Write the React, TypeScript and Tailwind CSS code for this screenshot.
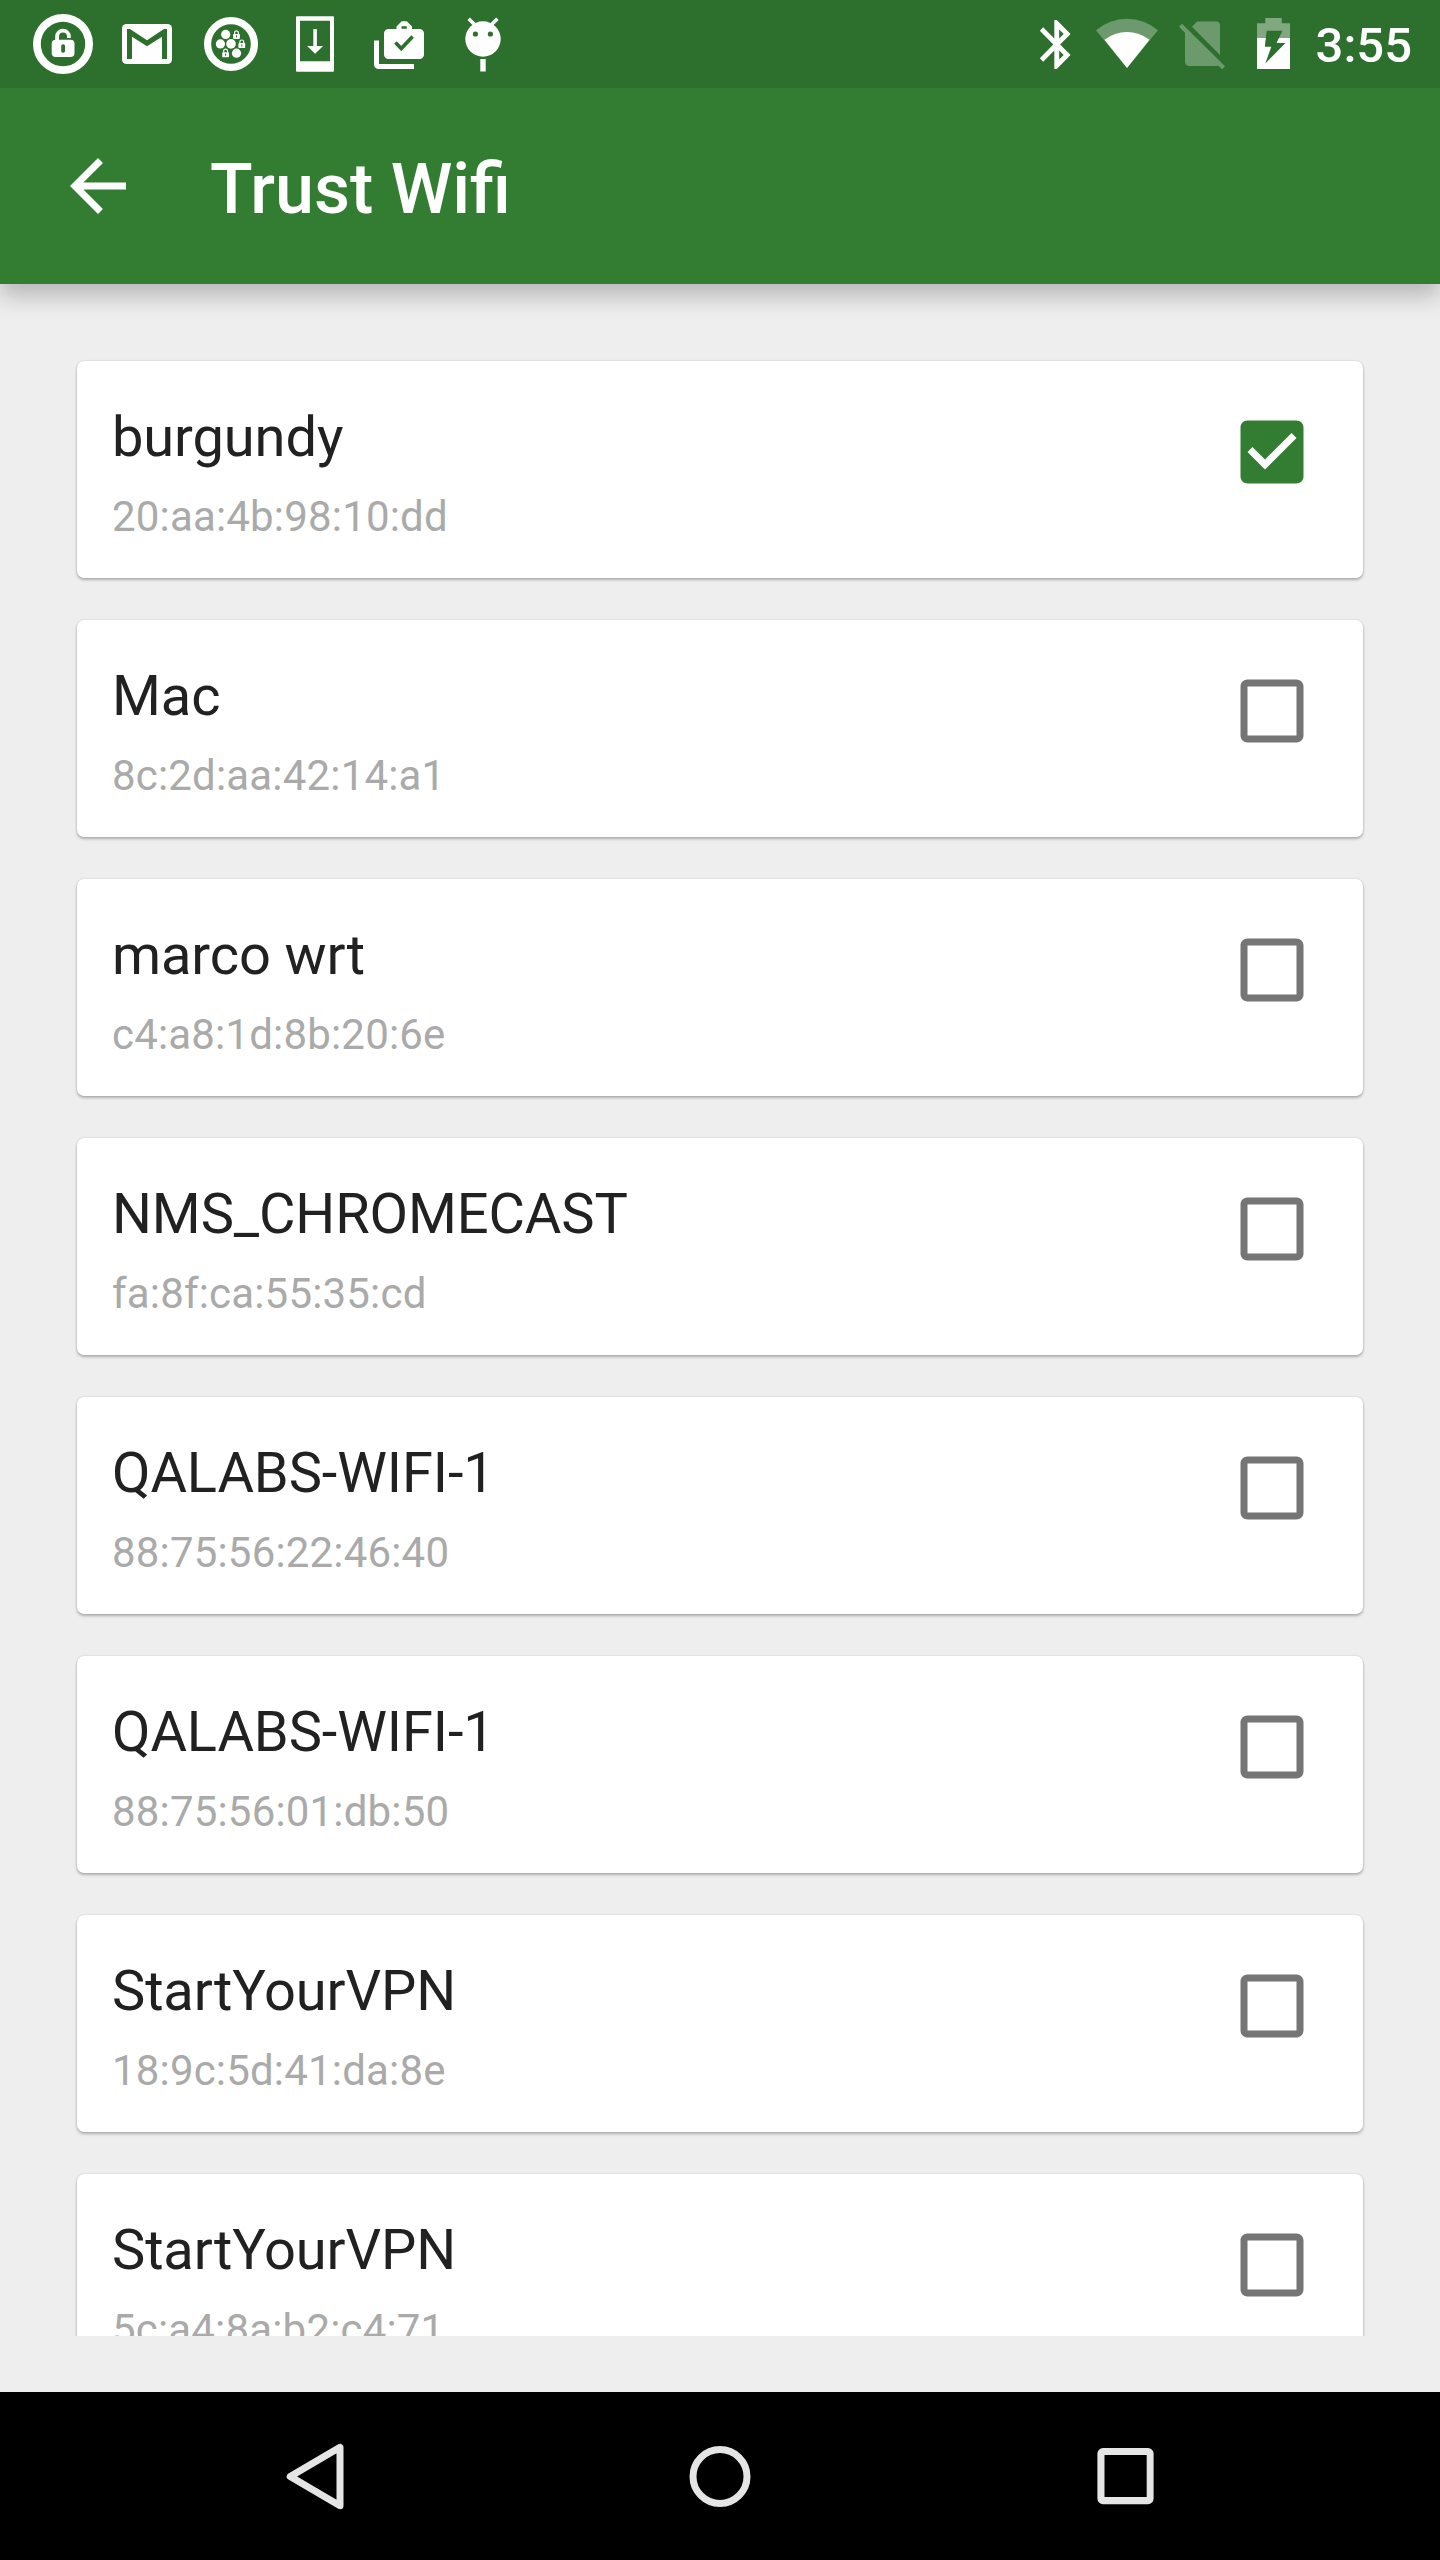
import React from "react";

type Network = { name: string; mac: string; trusted?: boolean };

const networks: Network[] = [
  { name: "burgundy", mac: "20:aa:4b:98:10:dd", trusted: true },
  { name: "Mac", mac: "8c:2d:aa:42:14:a1" },
  { name: "marco wrt", mac: "c4:a8:1d:8b:20:6e" },
  { name: "NMS_CHROMECAST", mac: "fa:8f:ca:55:35:cd" },
  { name: "QALABS-WIFI-1", mac: "88:75:56:22:46:40" },
  { name: "QALABS-WIFI-1", mac: "88:75:56:01:db:50" },
  { name: "StartYourVPN", mac: "18:9c:5d:41:da:8e" },
  { name: "StartYourVPN", mac: "5c:a4:8a:b2:c4:71" },
];

const TinyLock = ({ x, y }: { x: number; y: number }) => (
  <g transform={`translate(${x} ${y})`}>
    <rect x="-3.4" y="-0.7" width="6.8" height="5" rx="0.8" fill="#fff" />
    <path d="M-1.9 -0.5V-1.9a1.9 1.9 0 0 1 3.8 0V-0.5" fill="none" stroke="#fff" strokeWidth="1.2" />
    <path d="M0 0.7V2.8" stroke="#2d6f2d" strokeWidth="1" />
  </g>
);

function StatusBar() {
  return (
    <div className="flex h-[88px] items-start bg-[#2d6f2d] pl-[30px] pr-[28px] pt-[10px]">
      {/* Lock */}
      <svg className="h-[70px] w-[66px] shrink-0" viewBox="30 10 66 70">
        <circle cx="63" cy="44" r="26.1" fill="none" stroke="#fff" strokeWidth="7.8" />
        <path d="M57.1 40V36.6a5.9 5.9 0 0 1 11.8 0V38" fill="none" stroke="#fff" strokeWidth="3.8" />
        <rect x="51.7" y="39.7" width="22.8" height="17.4" rx="4" fill="#fff" />
        <rect x="61.2" y="44.3" width="3.8" height="8.4" rx="1.6" fill="#2d6f2d" />
      </svg>
      {/* Mail */}
      <svg className="ml-[16px] h-[70px] w-[70px] shrink-0" viewBox="112 10 70 70">
        <rect x="122" y="24" width="50" height="40" rx="4.5" fill="#fff" />
        <path d="M127 29h3l17 11.2L164 29h3v30h-5V36.8L147 46.2 132 36.8V59h-5z" fill="#2d6f2d" />
      </svg>
      {/* Lock cluster */}
      <svg className="ml-[13px] h-[70px] w-[70px] shrink-0" viewBox="195 10 70 70">
        <circle cx="231" cy="44" r="23.4" fill="none" stroke="#fff" strokeWidth="7.2" />
        <circle cx="225.7" cy="34.4" r="4.6" fill="#fff" />
        <circle cx="220.4" cy="43.9" r="4.6" fill="#fff" />
        <circle cx="231" cy="43.9" r="4.8" fill="#fff" />
        <circle cx="236.5" cy="53.2" r="4.6" fill="#fff" />
        <TinyLock x={236.5} y={34.6} />
        <TinyLock x={241.8} y={43.8} />
        <TinyLock x={225.6} y={53} />
      </svg>
      {/* System download */}
      <svg className="ml-[20px] h-[70px] w-[60px] shrink-0" viewBox="285 10 60 70">
        <path fillRule="evenodd" d="M297 16.3h36a1 1 0 0 1 1 1v53.4a1 1 0 0 1-1 1h-36a1 1 0 0 1-1-1v-53.4a1 1 0 0 1 1-1zM300 20.7v40.6h30v-40.6z" fill="#fff" />
        <path d="M313.3 29h3.6v17h6.2l-8 7.8-8-7.8h6.2z" fill="#fff" />
      </svg>
      {/* Briefcase check */}
      <svg className="ml-[19px] h-[70px] w-[70px] shrink-0" viewBox="364 10 70 70">
        <path fillRule="evenodd" d="M388.5 29h8v-2.5l5.2-5.3h5.1l5.2 5.3v2.5h7.5a4.5 4.5 0 0 1 4.5 4.5v21a4.5 4.5 0 0 1-4.5 4.5h-31a4.5 4.5 0 0 1-4.5-4.5v-21a4.5 4.5 0 0 1 4.5-4.5zM401.5 26.2v2.6h5.3v-2.6z" fill="#fff" />
        <path d="M395.4 42.6l5.9 6L412.6 36.5" fill="none" stroke="#2d6f2d" strokeWidth="3.6" />
        <path d="M374 40.5h5V64h35v5h-35.5a4.5 4.5 0 0 1-4.5-4.5z" fill="#fff" />
      </svg>
      {/* Android head */}
      <svg className="ml-[16px] h-[70px] w-[66px] shrink-0" viewBox="450 10 66 70">
        <circle cx="483" cy="39" r="17.7" fill="#fff" />
        <path d="M468.7 18.7l6.5 6.5M497.4 18.7l-6.5 6.5" stroke="#fff" strokeWidth="3.5" />
        <circle cx="475.4" cy="34" r="2.6" fill="#2d6f2d" />
        <circle cx="490.4" cy="34" r="2.6" fill="#2d6f2d" />
        <rect x="480.3" y="59" width="5.4" height="12.5" fill="#fff" />
      </svg>

      {/* Bluetooth */}
      <svg className="ml-auto h-[70px] w-[50px] shrink-0" viewBox="1030 10 50 70">
        <path transform="translate(1027.700 15.100) scale(2.420 2.450)" d="M17.71 7.71L12 2h-1v7.59L6.41 5 5 6.41 10.59 12 5 17.59 6.41 19 11 14.41V22h1l5.71-5.71-4.3-4.29 4.3-4.29zM13 5.83l1.88 1.88L13 9.59V5.83zm1.88 10.46L13 18.17v-3.76l1.88 1.88z" fill="#fff" />
      </svg>
      {/* Wifi signal */}
      <svg className="ml-[10px] h-[70px] w-[74px] shrink-0" viewBox="1090 10 74 70">
        <path d="M1127 68L1096 30.3A47.6 47.6 0 0 1 1158 30.3z" fill="#fff" fillOpacity="0.3" />
        <path d="M1127 68L1104.5 39.7A36.4 36.4 0 0 1 1149.5 39.7z" fill="#fff" />
      </svg>
      {/* No SIM */}
      <svg className="ml-[6px] h-[70px] w-[60px] shrink-0" viewBox="1170 10 60 70">
        <path d="M1192 26.7l5-5.2h19a4 4 0 0 1 4 4V55zM1179 26.7l3-3L1225 66.3l-3 3-3.8-3.8q-1 .5-2.200.5H1189.3a4.3 4.3 0 0 1-4.3-4.3V32.7z" fill="#fff" fillOpacity="0.3" />
      </svg>
      {/* Battery charging */}
      <svg className="ml-[20px] h-[70px] w-[46px] shrink-0" viewBox="1250 10 46 70">
        <path d="M1257 38V23.3h8.3V18h16.4v5.3h8.3V38z" fill="#fff" fillOpacity="0.4" />
        <path d="M1257 38h33v31h-33z" fill="#fff" />
        <path d="M1266.7 30.7h15.8L1276.5 43h8.9L1265.3 63.4 1271.3 46.7h-6.5z" fill="#2d6f2d" />
      </svg>
      <div className="mt-[7px] w-[116px] shrink-0 whitespace-nowrap text-right text-[49px] font-medium leading-[58px] text-white">
        3:55
      </div>
    </div>
  );
}

function CheckBox({ checked }: { checked?: boolean }) {
  return (
    <svg className="mr-[49px] mt-[49px] size-[84px] shrink-0" viewBox="0 0 24 24">
      {checked ? (
        <path fill="#337d33" d="M19 3H5c-1.11 0-2 .9-2 2v14c0 1.1.89 2 2 2h14c1.11 0 2-.9 2-2V5c0-1.1-.89-2-2-2zm-9 14l-5-5 1.41-1.41L10 14.17l7.59-7.59L19 8l-9 9z" />
      ) : (
        <path fill="#757575" d="M19 5v14H5V5h14m0-2H5c-1.1 0-2 .9-2 2v14c0 1.1.9 2 2 2h14c1.1 0 2-.9 2-2V5c0-1.1-.9-2-2-2z" />
      )}
    </svg>
  );
}

function NetworkCard({ network }: { network: Network }) {
  return (
    <div className="flex h-[217px] shrink-0 items-start justify-between rounded-[7px] bg-white shadow-[0_2px_3px_rgba(0,0,0,0.26),0_0_2px_rgba(0,0,0,0.16)]">
      <div className="pl-[35px] pt-[43px]">
        <div className="text-[56px] leading-[66px] tracking-[-0.1px] text-[#212121]">{network.name}</div>
        <div className="mt-[22px] text-[42px] leading-[50px] tracking-[0.18px] text-[#aaaaaa]">{network.mac}</div>
      </div>
      <CheckBox checked={network.trusted} />
    </div>
  );
}

export default function App() {
  return (
    <div className="flex h-[2560px] w-[1440px] flex-col overflow-hidden bg-[#eeeeee] font-[Roboto,sans-serif]">
      <header className="relative z-10 shrink-0 bg-[#337d33] shadow-[0_12px_22px_rgba(0,0,0,0.23)]">
        <StatusBar />
        <div className="flex h-[196px] items-start pl-[56px] pt-[56px]">
          <svg className="size-[84px]" viewBox="0 0 24 24" fill="#fff">
            <path d="M20 11H7.83l5.59-5.59L12 4l-8 8 8 8 1.41-1.41L7.83 13H20v-2z" />
          </svg>
          <h1 className="ml-[70px] mt-[4px] text-[70px] font-medium leading-[82px] text-white">Trust Wifi</h1>
        </div>
      </header>

      <main className="flex h-[2052px] shrink-0 flex-col gap-[42px] overflow-hidden px-[77px] pt-[77px]">
        {networks.map((n) => (
          <NetworkCard key={n.mac} network={n} />
        ))}
      </main>

      <nav className="mt-[56px] flex h-[168px] shrink-0 items-start bg-black pl-[270px] pt-[28px]">
        <svg className="size-[120px]" viewBox="0 0 120 120" fill="none" stroke="#e5e5e5" strokeWidth="7" strokeLinejoin="round">
          <path d="M20.2 56.5L70 27.3V85.7z" />
        </svg>
        <svg className="ml-[270px] size-[120px]" viewBox="0 0 120 120" fill="none" stroke="#e5e5e5" strokeWidth="7">
          <circle cx="60" cy="56.5" r="27" />
        </svg>
        <svg className="ml-[300px] size-[120px]" viewBox="0 0 120 120" fill="#e5e5e5">
          <path fillRule="evenodd" d="M23 28h45a5.6 5.6 0 0 1 5.6 5.6v45a5.6 5.6 0 0 1-5.6 5.6H23a5.6 5.6 0 0 1-5.6-5.6v-45A5.6 5.6 0 0 1 23 28zM24.5 35v42h42.2v-42z" />
        </svg>
      </nav>
    </div>
  );
}
